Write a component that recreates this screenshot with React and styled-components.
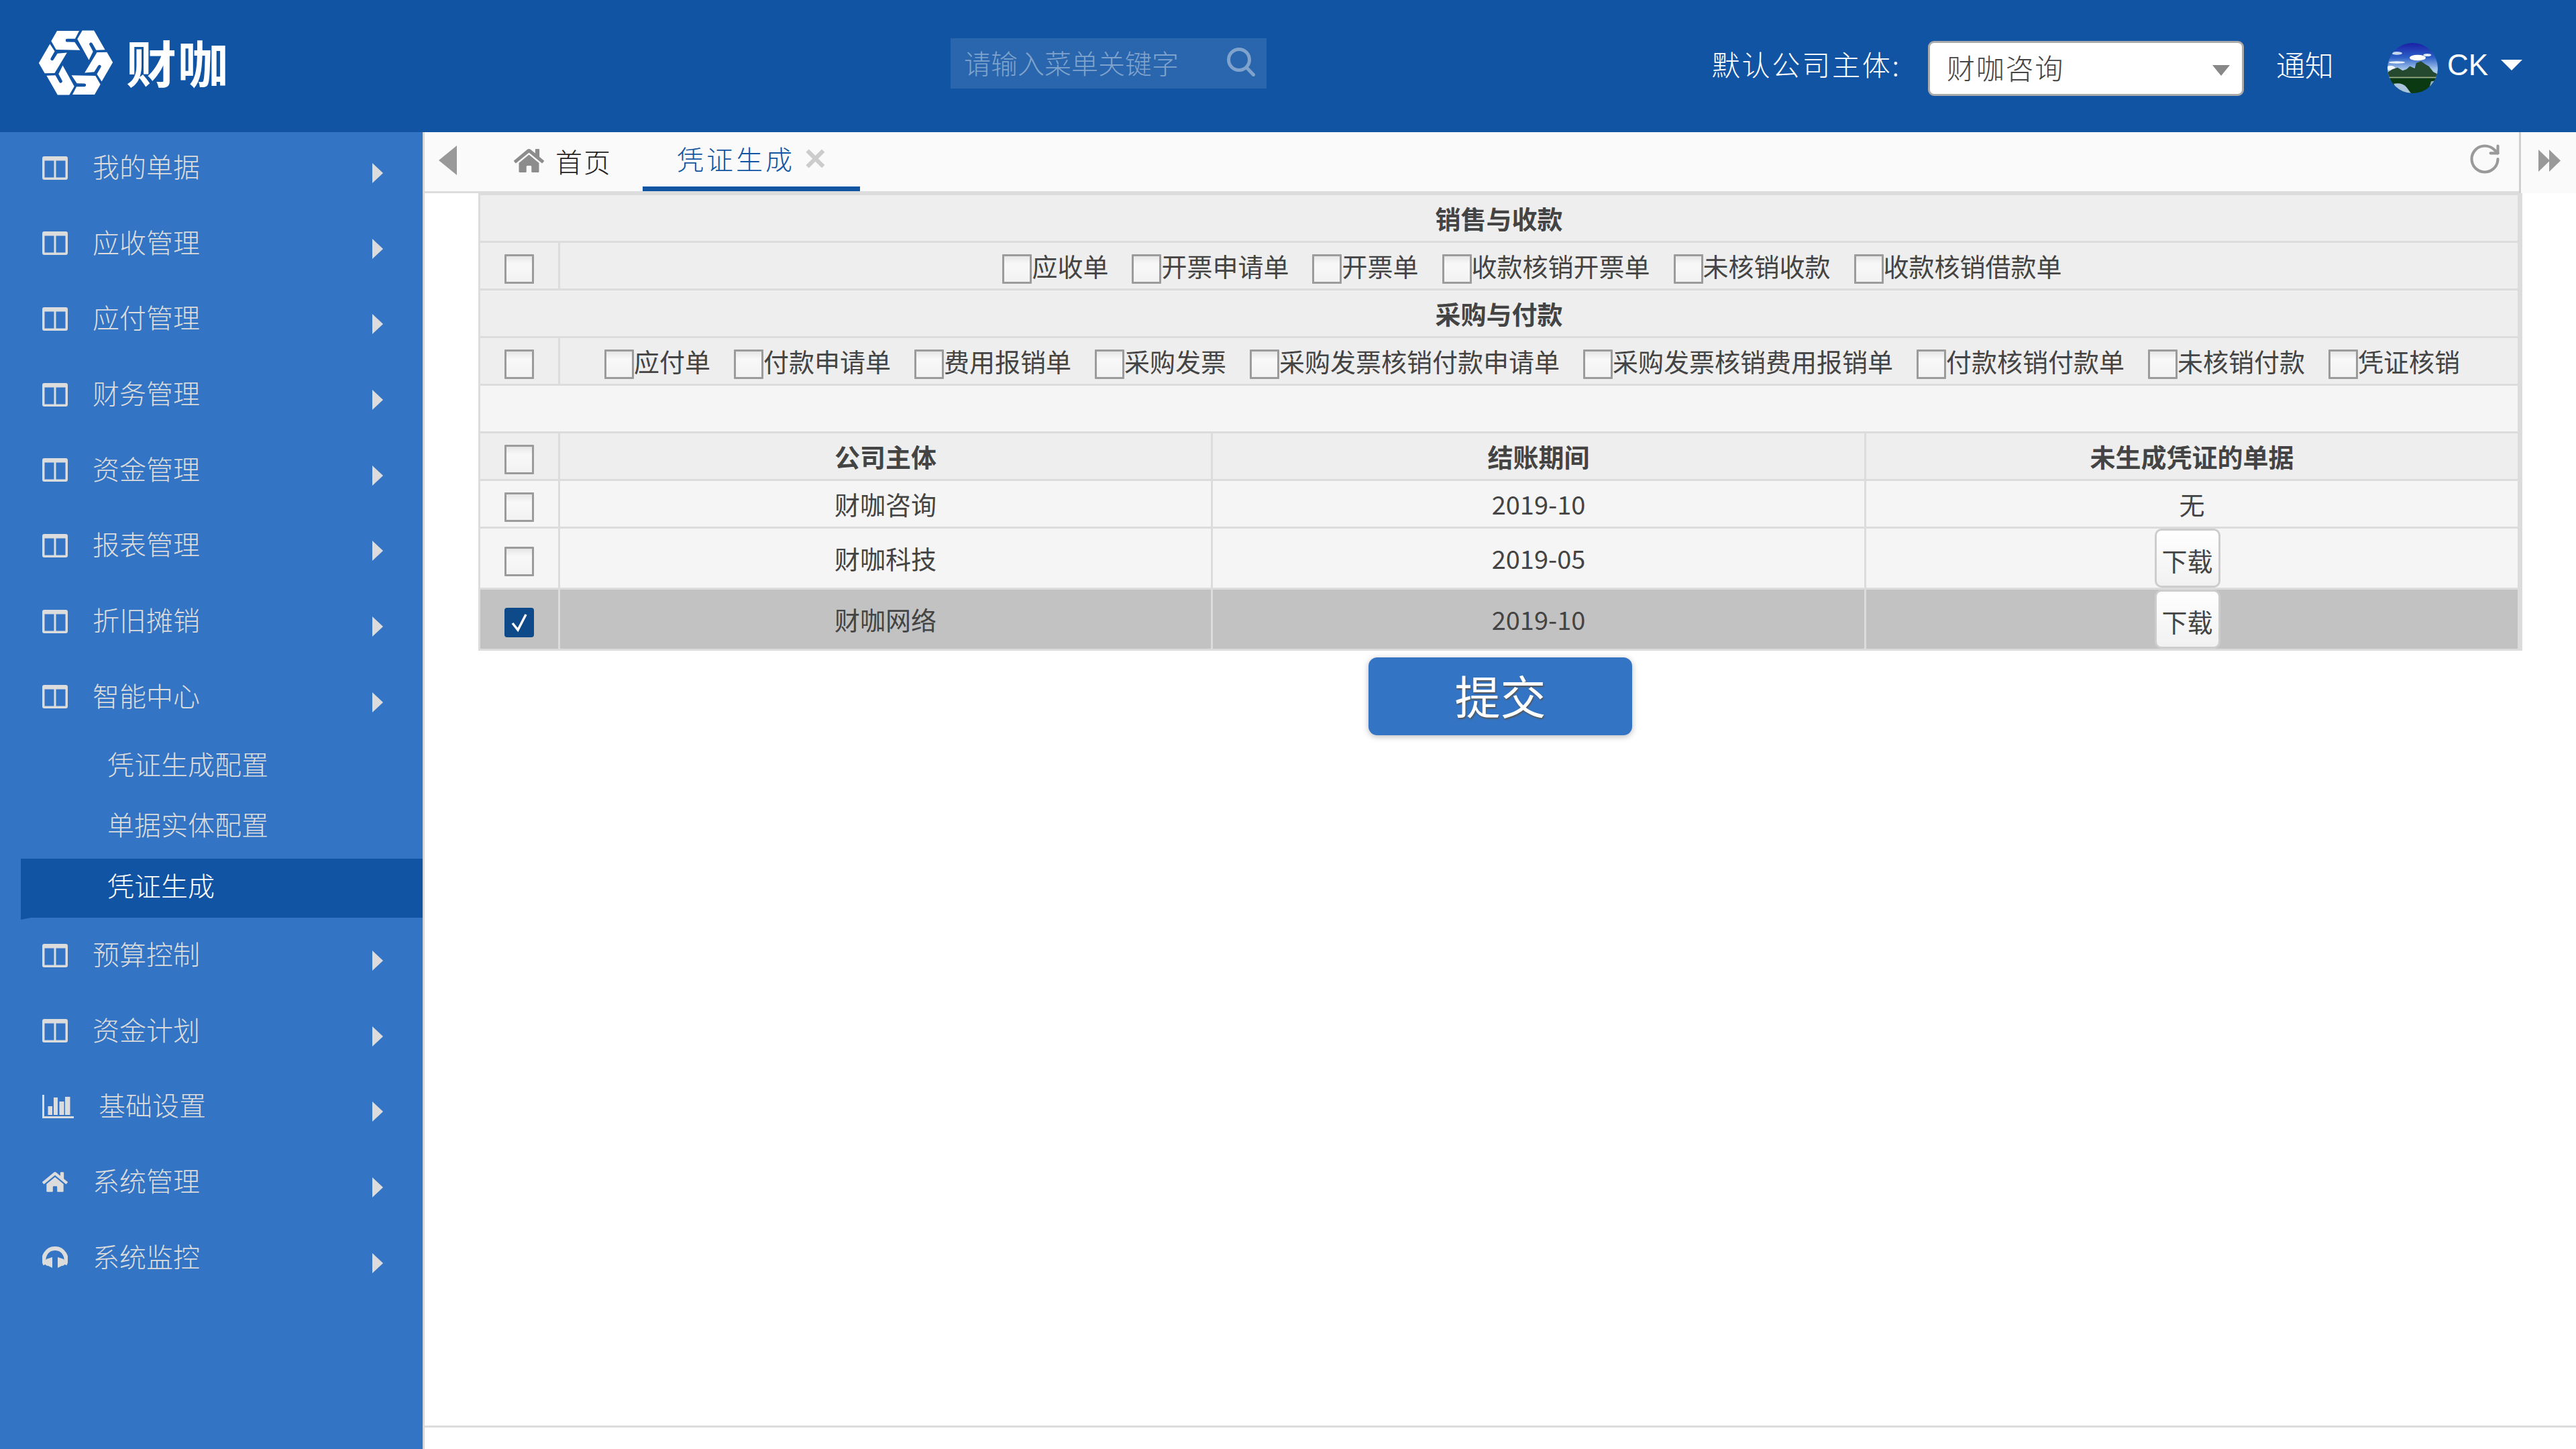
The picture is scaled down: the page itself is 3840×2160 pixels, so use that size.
import React from "react";
import styled, { createGlobalStyle } from "styled-components";
import { FaHome } from "react-icons/fa";
import { RotateCw } from "lucide-react";

const Global = createGlobalStyle`
  html, body { margin: 0; padding: 0; background: #fff; }
  body { font-family: "Noto Sans CJK SC", "Noto Sans", sans-serif; font-weight: 300; }
  * { box-sizing: border-box; }
`;

const Page = styled.div`
  width: 3840px;
  height: 2160px;
  display: grid;
  grid-template-rows: 197px 1fr;
  overflow: hidden;
`;

/* ---------- header ---------- */
const Header = styled.header`
  background: #1154a3;
  display: flex;
  align-items: flex-start;
  padding-right: 80px;
`;
const Brand = styled.div`
  width: 1417px;
  padding: 45px 0 0 58px;
  display: flex;
  align-items: flex-start;
  color: #fff;
`;
const BrandName = styled.span`
  margin: 3px 0 0 20px;
  font-size: 75px;
  line-height: 88px;
  font-weight: 700;
  letter-spacing: 2px;
  white-space: nowrap;
`;
const Search = styled.div`
  width: 471px;
  height: 75px;
  margin-top: 57px;
  background: #2a66ad;
  color: #7fa3cc;
  display: flex;
  align-items: center;
  justify-content: space-between;
  padding: 0 17px 4px 20px;
  font-size: 40px;
  white-space: nowrap;
`;
const UserArea = styled.div`
  margin-left: auto;
  display: flex;
  align-items: flex-start;
`;
const CompanyLabel = styled.span`
  margin-top: 68px;
  color: #fff;
  font-size: 42px;
  line-height: 54px;
  letter-spacing: 2.8px;
  white-space: nowrap;
`;
const CompanySelect = styled.div`
  width: 471px;
  height: 82px;
  margin: 61px 0 0 40px;
  background: #fff;
  border: 3px solid #aaa;
  border-radius: 9px;
  display: flex;
  align-items: center;
  justify-content: space-between;
  padding: 0 18px 6px 25px;
  color: #444;
  font-size: 42px;
  letter-spacing: 1.8px;
`;
const GreyDown = styled.i`
  width: 0;
  height: 0;
  margin-top: 12px;
  border-left: 13px solid transparent;
  border-right: 13px solid transparent;
  border-top: 16px solid #888;
`;
const Notice = styled.span`
  margin: 68px 0 0 48px;
  color: #fff;
  font-size: 43px;
  line-height: 54px;
  white-space: nowrap;
`;
const Avatar = styled.svg`
  width: 75px;
  height: 75px;
  margin: 64px 0 0 80px;
  display: block;
`;
const UserName = styled.span`
  margin: 70px 0 0 14px;
  color: #fff;
  font-family: "Liberation Sans", sans-serif;
  font-weight: 400;
  font-size: 44px;
  line-height: 54px;
`;
const WhiteDown = styled.i`
  width: 0;
  height: 0;
  margin: 89px 0 0 19px;
  border-left: 16.5px solid transparent;
  border-right: 16.5px solid transparent;
  border-top: 16px solid #fff;
`;

/* ---------- body ---------- */
const Body = styled.div`
  display: grid;
  grid-template-columns: 633px 1fr;
  min-height: 0;
`;
const Sidebar = styled.nav`
  background: #3374c4;
  border-right: 3px solid #d8d8d8;
  color: #dcdcdc;
`;
const NavRow = styled.div`
  height: 112.7px;
  padding: 33px 59px 0 63px;
  display: flex;
  align-items: flex-start;
  font-size: 40px;
  line-height: 40px;
`;
const NavIcon = styled.span`
  display: flex;
  height: 40px;
  align-items: center;
  margin-right: 37px;
  color: #dcdcdc;
  svg { display: block; }
`;
const NavLabel = styled.span`
  margin-top: -3px;
`;
const NavCaret = styled.i`
  margin: 13px 0 0 auto;
  width: 0;
  height: 0;
  border-top: 15px solid transparent;
  border-bottom: 15px solid transparent;
  border-left: 16px solid #dcdcdc;
`;
const SubList = styled.div`
  padding: 0.4px 0 3px 31px;
  display: flex;
  flex-direction: column;
  gap: 2.6px;
`;
const SubItem = styled.div`
  position: relative;
  height: 88px;
  padding-left: 129px;
  font-size: 40px;
  line-height: 79px;
  background: ${(p) => (p.$active ? "#1154a3" : "transparent")};
  color: ${(p) => (p.$active ? "#fff" : "#dcdcdc")};
  ${(p) =>
    p.$active &&
    `&::after {
      content: "";
      position: absolute;
      left: 0;
      top: 100%;
      border-top: 3px solid #1154a3;
      border-right: 15px solid transparent;
    }`}
`;

const Main = styled.main`
  display: flex;
  flex-direction: column;
  min-width: 0;
`;
const TabBar = styled.div`
  height: 91px;
  flex: none;
  background: #fafafa;
  border-bottom: 3px solid #dcdcdc;
  display: flex;
  align-items: stretch;
`;
const ArrowLeft = styled.i`
  align-self: flex-start;
  margin: 20px 0 0 21px;
  width: 0;
  height: 0;
  border-top: 22px solid transparent;
  border-bottom: 22px solid transparent;
  border-right: 27px solid #999;
`;
const HomeTab = styled.div`
  margin-left: 85px;
  width: 192px;
  display: flex;
  align-items: center;
  gap: 17px;
  color: #222;
  font-size: 40px;
  letter-spacing: 2px;
  padding-bottom: 3px;
  svg { color: #8c8c8c; display: block; }
`;
const ActiveTab = styled.div`
  width: 324px;
  display: flex;
  align-items: center;
  padding: 0 0 3px 51px;
  gap: 14px;
  color: #1154a3;
  font-size: 40px;
  letter-spacing: 4px;
  border-bottom: 7px solid #1154a3;
  height: 88px;
`;
const TabClose = styled.span`
  color: #ccc;
  font-size: 56px;
  line-height: 40px;
  font-weight: 700;
  letter-spacing: 0;
  font-family: "Liberation Sans", sans-serif;
`;
const Refresh = styled.span`
  margin: 14px 0 0 auto;
  color: #999;
  svg { display: block; }
`;
const EndCap = styled.div`
  margin-left: 25px;
  width: 85px;
  border-left: 3px solid #cfcfcf;
  padding: 26px 0 0 26px;
  margin-bottom: -3px;
  background: #fafafa;
  svg { display: block; }
`;

const Content = styled.div`
  flex: 1;
  padding: 0 80px;
  display: flex;
  flex-direction: column;
  align-items: center;
  min-height: 0;
`;
const GridTable = styled.table`
  width: 3047px;
  table-layout: fixed;
  border-collapse: separate;
  border-spacing: 3px;
  background: #dcdcdc;
  border-right: 4px solid #dcdcdc;
  color: #444;
  font-size: 38px;
`;
const Cell = styled.td`
  padding: ${(p) => (p.$pushLeft ? "0 14px 0 0" : "0")};
  height: ${(p) => p.$h || 68}px;
  text-align: center;
  vertical-align: middle;
  background: ${(p) => p.$bg || "#f5f5f5"};
  font-weight: ${(p) => (p.$bold ? 700 : 400)};
  line-height: 1;
`;
const Options = styled.div`
  display: flex;
  justify-content: center;
  align-items: center;
  gap: 35px;
  padding-right: 20px;
  white-space: nowrap;
`;
const Option = styled.label`
  display: flex;
  align-items: center;
`;
const Check = styled.span`
  display: inline-flex;
  align-items: center;
  justify-content: center;
  width: 44px;
  height: 44px;
  margin-top: 10px;
  border-radius: ${(p) => (p.$on ? "4px" : "1px")};
  border: ${(p) => (p.$on ? "none" : "3px solid #9b9b9b")};
  background: ${(p) => (p.$on ? "#0e4a8a" : "linear-gradient(#e6e6e6, #f8f8f8 30%, #f2f2f2)")};
  vertical-align: middle;
`;
const DownloadButton = styled.button`
  display: block;
  width: 98px;
  height: 88px;
  margin: 0 auto;
  padding: 6px 0 0;
  border: 3px solid #cdcdcd;
  border-radius: 10px;
  background: linear-gradient(#ffffff, #f1f1f1);
  color: #444;
  font: inherit;
  font-size: 38px;
`;
const SubmitButton = styled.button`
  width: 393px;
  height: 116px;
  margin-top: 10px;
  flex: none;
  border: none;
  border-radius: 13px;
  background: #3374c4;
  box-shadow: 0 2px 10px rgba(0, 0, 0, 0.28);
  color: #fff;
  font-family: inherit;
  font-size: 68px;
  font-weight: 400;
  text-shadow: 1px 2px 2px #555;
  padding: 0 0 5px;
`;
const Footer = styled.div`
  height: 35px;
  flex: none;
  border-top: 3px solid #dcdcdc;
`;

/* ---------- drawings ---------- */
const LogoMark = () => (
  <svg width="110" height="97" viewBox="54 42 326 288" fill="#fff" style={{ flex: "none" }}>
    {[0, 60, 120, 180, 240, 300].map((a) => (
      <path
        key={a}
        transform={`rotate(${a} 217 186)`}
        d="M108 90 L134 45 L232 45 L214 80 L180 80 Q172 80 172 87 Q172 94 180 94 L212 95 L236 130 L130 128 Z"
      />
    ))}
  </svg>
);

const ColumnsIcon = () => (
  <svg width="38" height="35" viewBox="0 0 38 35" fill="currentColor">
    <path
      fillRule="evenodd"
      d="M3 0h32a3 3 0 0 1 3 3v29a3 3 0 0 1-3 3H3a3 3 0 0 1-3-3V3a3 3 0 0 1 3-3z M3.5 6.5v25h14v-25z M20.5 6.5v25h14v-25z"
    />
  </svg>
);

const ChartIcon = () => (
  <svg width="47" height="35" viewBox="0 0 47 35" fill="currentColor">
    <path d="M0 0h3v32h44v3H0z" />
    <rect x="8.5" y="17" width="6.5" height="13" />
    <rect x="17" y="4" width="6" height="26" />
    <rect x="25.5" y="10" width="7" height="20" />
    <rect x="34" y="3" width="7.5" height="27" />
  </svg>
);

const HeadphonesIcon = () => (
  <svg width="38" height="33" viewBox="0 0 38 33" fill="currentColor">
    <path d="M4.3 27A16.5 16.5 0 1 1 33.7 27" fill="none" stroke="currentColor" strokeWidth="6" />
    <path d="M9 18L15 16V32L9 29Q4 29 4 24Q4 19 9 18Z" />
    <path d="M29 18L23 16V32L29 29Q34 29 34 24Q34 19 29 18Z" />
  </svg>
);

const SearchIcon = () => (
  <svg width="42" height="43" viewBox="0 0 42 43" fill="none" stroke="#7fa3cc" strokeWidth="5" strokeLinecap="round">
    <circle cx="18" cy="18" r="15.5" />
    <line x1="29.5" y1="30" x2="39.5" y2="40.5" />
  </svg>
);

const AvatarPicture = () => (
  <Avatar viewBox="0 0 225 225">
    <defs>
      <linearGradient id="sky" x1="0" y1="0" x2="0" y2="1">
        <stop offset="0" stopColor="#1a1fa6" />
        <stop offset="0.4" stopColor="#2b5fc6" />
        <stop offset="0.75" stopColor="#a9c9ec" />
      </linearGradient>
      <clipPath id="round">
        <circle cx="112.5" cy="112.5" r="112.5" />
      </clipPath>
    </defs>
    <g clipPath="url(#round)">
      <rect width="225" height="160" fill="url(#sky)" />
      <ellipse cx="42" cy="46" rx="24" ry="7" fill="#c4d8f2" />
      <ellipse cx="135" cy="66" rx="36" ry="13" fill="#fff" />
      <ellipse cx="178" cy="54" rx="18" ry="6" fill="#e4eefa" />
      <ellipse cx="42" cy="87" rx="36" ry="5" fill="#e8f0fa" />
      <ellipse cx="14" cy="112" rx="20" ry="10" fill="#f4f8fd" />
      <path
        d="M0 132L22 118L45 110L68 124L85 118L100 104L122 114L128 90L150 82L170 96L185 104L205 130L225 140V156H0Z"
        fill="#24492f"
      />
      <rect y="152" width="225" height="5" fill="#a3ad82" />
      <rect y="157" width="225" height="68" fill="#0b3a12" />
      <path d="M28 182Q68 176 85 198L105 225H45Z" fill="#a8c4de" />
      <path d="M195 172L225 168V225H180Z" fill="#90b0cc" />
    </g>
  </Avatar>
);

const DoubleArrow = () => (
  <svg width="33" height="33" viewBox="0 0 33 33" fill="#999">
    <polygon points="0,0 17,16.5 0,33" />
    <polygon points="16,0 33,16.5 16,33" />
  </svg>
);

/* ---------- data ---------- */
const navTop = ["我的单据", "应收管理", "应付管理", "财务管理", "资金管理", "报表管理", "折旧摊销", "智能中心"];
const navSub = [
  { label: "凭证生成配置" },
  { label: "单据实体配置" },
  { label: "凭证生成", active: true },
];
const navBottom = [
  { label: "预算控制", icon: <ColumnsIcon /> },
  { label: "资金计划", icon: <ColumnsIcon /> },
  { label: "基础设置", icon: <ChartIcon /> },
  { label: "系统管理", icon: <FaHome size={38} /> },
  { label: "系统监控", icon: <HeadphonesIcon /> },
];
const salesOptions = ["应收单", "开票申请单", "开票单", "收款核销开票单", "未核销收款", "收款核销借款单"];
const buyOptions = ["应付单", "付款申请单", "费用报销单", "采购发票", "采购发票核销付款申请单", "采购发票核销费用报销单", "付款核销付款单", "未核销付款", "凭证核销"];

const NavEntry = ({ label, icon }) => (
  <NavRow>
    <NavIcon>{icon || <ColumnsIcon />}</NavIcon>
    <NavLabel>{label}</NavLabel>
    <NavCaret />
  </NavRow>
);

const OptionRow = ({ items }) => (
  <tr>
    <Cell $bg="#eee"><Check /></Cell>
    <Cell $bg="#eee" colSpan={3}>
      <Options>
        {items.map((t) => (
          <Option key={t}>
            <Check />
            {t}
          </Option>
        ))}
      </Options>
    </Cell>
  </tr>
);

const DataRow = ({ name, period, last, h, bg, on }) => (
  <tr>
    <Cell $h={h} $bg={bg}>
      <Check $on={on}>
        {on && (
          <svg width="26" height="30" viewBox="0 0 26 30" fill="none" stroke="#fff" strokeWidth="3.5">
            <path d="M3 16L11 26L23 3" />
          </svg>
        )}
      </Check>
    </Cell>
    <Cell $h={h} $bg={bg}>{name}</Cell>
    <Cell $h={h} $bg={bg}>{period}</Cell>
    {last ? (
      <Cell $h={h} $bg={bg}>{last}</Cell>
    ) : (
      <Cell $h={h} $bg={bg} $pushLeft>
        <DownloadButton>下载</DownloadButton>
      </Cell>
    )}
  </tr>
);

export default function App() {
  return (
    <Page>
      <Global />
      <Header>
        <Brand>
          <LogoMark />
          <BrandName>财咖</BrandName>
        </Brand>
        <Search>
          <span>请输入菜单关键字</span>
          <SearchIcon />
        </Search>
        <UserArea>
          <CompanyLabel>默认公司主体:</CompanyLabel>
          <CompanySelect>
            <span>财咖咨询</span>
            <GreyDown />
          </CompanySelect>
          <Notice>通知</Notice>
          <AvatarPicture />
          <UserName>CK</UserName>
          <WhiteDown />
        </UserArea>
      </Header>
      <Body>
        <Sidebar>
          {navTop.map((l) => (
            <NavEntry key={l} label={l} />
          ))}
          <SubList>
            {navSub.map((s) => (
              <SubItem key={s.label} $active={s.active}>{s.label}</SubItem>
            ))}
          </SubList>
          {navBottom.map((n) => (
            <NavEntry key={n.label} label={n.label} icon={n.icon} />
          ))}
        </Sidebar>
        <Main>
          <TabBar>
            <ArrowLeft />
            <HomeTab>
              <FaHome size={45} />
              首页
            </HomeTab>
            <ActiveTab>
              凭证生成
              <TabClose>×</TabClose>
            </ActiveTab>
            <Refresh>
              <RotateCw size={52} strokeWidth={1.9} />
            </Refresh>
            <EndCap>
              <DoubleArrow />
            </EndCap>
          </TabBar>
          <Content>
            <GridTable>
              <colgroup>
                <col style={{ width: 116 }} />
                <col style={{ width: 970 }} />
                <col style={{ width: 971 }} />
                <col />
              </colgroup>
              <tbody>
                <tr><Cell $bg="#eee" $bold colSpan={4}>销售与收款</Cell></tr>
                <OptionRow items={salesOptions} />
                <tr><Cell $bg="#eee" $bold colSpan={4}>采购与付款</Cell></tr>
                <OptionRow items={buyOptions} />
                <tr><Cell colSpan={4} /></tr>
                <tr>
                  <Cell $bg="#eee"><Check /></Cell>
                  <Cell $bg="#eee" $bold>公司主体</Cell>
                  <Cell $bg="#eee" $bold>结账期间</Cell>
                  <Cell $bg="#eee" $bold>未生成凭证的单据</Cell>
                </tr>
                <DataRow name="财咖咨询" period="2019-10" last="无" />
                <DataRow name="财咖科技" period="2019-05" h={88} />
                <DataRow name="财咖网络" period="2019-10" h={88} bg="#c2c2c2" on />
              </tbody>
            </GridTable>
            <SubmitButton>提交</SubmitButton>
          </Content>
          <Footer />
        </Main>
      </Body>
    </Page>
  );
}
